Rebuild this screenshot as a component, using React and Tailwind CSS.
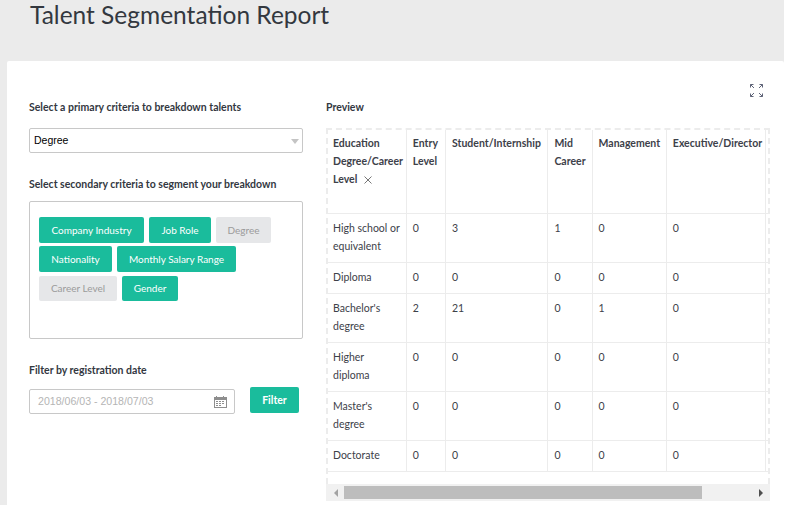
const font = "font-['Lato','Noto_Sans',sans-serif]";

const tags = [
  [
    { label: "Company Industry", w: "w-[105px]" },
    { label: "Job Role", w: "w-[62px]" },
    { label: "Degree", w: "w-[55px]", off: true },
  ],
  [
    { label: "Nationality", w: "w-[73px]" },
    { label: "Monthly Salary Range", w: "w-[119px]" },
  ],
  [
    { label: "Career Level", w: "w-[78px]", off: true, short: true },
    { label: "Gender", w: "w-[56px]", short: true },
  ],
];

const columns = [
  { title: "Entry Level", w: "w-[39px]" },
  { title: "Student/Internship", w: "w-[102px]" },
  { title: "Mid Career", w: "w-[44px]" },
  { title: "Management", w: "w-[74px]" },
  { title: "Executive/Director", w: "w-[99px]" },
];

const rows = [
  { name: "High school or equivalent", h: "h-[49px]", values: [0, 3, 1, 0, 0] },
  { name: "Diploma", h: "h-[31px]", values: [0, 0, 0, 0, 0] },
  { name: "Bachelor's degree", h: "h-[49px]", values: [2, 21, 0, 1, 0] },
  { name: "Higher diploma", h: "h-[49px]", values: [0, 0, 0, 0, 0] },
  { name: "Master's degree", h: "h-[49px]", values: [0, 0, 0, 0, 0] },
  { name: "Doctorate", h: "h-[31px]", values: [0, 0, 0, 0, 0] },
];

function Tag({ label, w, off, short }) {
  return (
    <span
      className={`flex items-center justify-center rounded-[2px] text-[10px] ${short ? "h-[25px]" : "h-[26px]"} ${w} ${
        off ? "bg-[#e6e7e9] text-[#9b9b9b]" : "bg-[#1abc9c] text-white"
      }`}
    >
      {label}
    </span>
  );
}

function ExpandIcon() {
  return (
    <svg width="13" height="13" viewBox="0 0 13 13" fill="none" stroke="#5f6478" strokeWidth="1">
      <path d="M.5 3.5v-3h3M.5.5l3.5 3.5M12.5 3.5v-3h-3M12.5.5L9 4M.5 9.5v3h3M.5 12.5L4 9M12.5 9.5v3h-3M12.5 12.5L9 9" />
    </svg>
  );
}

function CalendarIcon() {
  return (
    <svg width="13" height="12" viewBox="0 0 13 12" fill="#8e8e8e">
      <path d="M0 1h2V0h1v1h6V0h1v1h3v11H0zM1 4v7h11V4z" />
      <path d="M2 5h2v1H2zM5 5h2v1H5zM8 5h2v1H8zM2 7h2v1H2zM5 7h2v1H5zM8 7h2v1H8zM2 9h2v1H2zM5 9h2v1H5z" />
    </svg>
  );
}

function CloseIcon() {
  return (
    <svg className="ml-[7px] inline-block align-[-1px]" width="8" height="8" viewBox="0 0 8 8" fill="none" stroke="#666" strokeWidth="0.9">
      <path d="M.5.5l7 7M7.5.5l-7 7" />
    </svg>
  );
}

function PreviewTable() {
  return (
    <div className="h-[356px] w-[444px] overflow-hidden border-x-2 border-t-2 border-dashed border-[#ececec]">
      <table className="w-[500px] table-fixed border-collapse text-[10.5px] leading-[18px] text-[#3d4149]">
        <thead>
          <tr className="h-[83px] border-b border-[#ececec] align-top">
            <th className="w-[78px] border-r border-[#ececec] pl-[5px] pt-[4px] text-left font-bold">
              Education Degree/Career Level
              <CloseIcon />
            </th>
            {columns.map((col) => (
              <th key={col.title} className={`${col.w} border-r border-[#ececec] pl-[6px] pt-[4px] text-left font-bold`}>
                {col.title}
              </th>
            ))}
            <th className="w-[62px]" />
          </tr>
        </thead>
        <tbody>
          {rows.map((row) => (
            <tr key={row.name} className={`${row.h} border-b border-[#ececec] align-top`}>
              <td className="border-r border-[#ececec] pl-[5px] pr-[5px] pt-[5px]">{row.name}</td>
              {row.values.map((v, i) => (
                <td key={i} className="border-r border-[#ececec] pl-[6px] pt-[5px]">
                  {v}
                </td>
              ))}
              <td />
            </tr>
          ))}
        </tbody>
      </table>
    </div>
  );
}

export default function App() {
  return (
    <div className={`${font} h-[505px] w-[787px] overflow-hidden bg-white`}>
      <div className="h-full w-[784px] bg-[#ebebeb] pl-[7px]">
        <h1 className="h-[61px] pl-[23px] text-[24.5px] leading-[30px] text-[#33383f]">Talent Segmentation Report</h1>

        <div className="relative flex h-[444px] gap-[23px] rounded-t-[2px] bg-white pl-[22px] pt-[39px]">
          <div className="absolute right-[21px] top-[23px]">
            <ExpandIcon />
          </div>

          {/* Left column */}
          <div className="w-[274px]">
            <p className="text-[10.5px] font-bold leading-[14px] text-[#33383f]">Select a primary criteria to breakdown talents</p>
            <div className="relative mt-[14px] flex h-[25px] items-center rounded-[2px] border border-[#c8c8c8] pl-1 pt-[1px] font-['Liberation_Sans',sans-serif] text-[10.5px] text-black">
              Degree
              <span className="absolute right-[3px] top-[10px] h-0 w-0 border-x-[4px] border-t-[5px] border-x-transparent border-t-[#c4c4c4]" />
            </div>

            <p className="mt-[24px] text-[10.5px] font-bold leading-[14px] text-[#33383f]">Select secondary criteria to segment your breakdown</p>
            <div className="mt-[10px] flex h-[138px] flex-col gap-[3px] rounded-[2px] border border-[#c8c8c8] pl-[9px] pt-[15px]">
              {tags.map((row, i) => (
                <div key={i} className={`flex gap-[5px] ${i === 2 ? "mt-[1px]" : ""}`}>
                  {row.map((tag) => (
                    <Tag key={tag.label} {...tag} />
                  ))}
                </div>
              ))}
            </div>

            <p className="mt-[24px] text-[10.5px] font-bold leading-[14px] text-[#33383f]">Filter by registration date</p>
            <div className="mt-[10px] flex items-start">
              <div className="mt-[2px] flex h-[25px] w-[206px] items-center justify-between rounded-[2px] border border-[#c8c8c8] pl-2 pr-[7px] pt-[1px] font-['Liberation_Sans',sans-serif] text-[10.6px] text-[#b5b5b5]">
                2018/06/03 - 2018/07/03
                <CalendarIcon />
              </div>
              <button className="ml-[15px] h-[26px] w-[49px] rounded-[2px] bg-[#1abc9c] pt-[1px] text-[10.5px] font-bold text-white">Filter</button>
            </div>
          </div>

          {/* Preview */}
          <div className="w-[444px]">
            <p className="text-[10.5px] font-bold leading-[14px] text-[#33383f]">Preview</p>
            <div className="mt-[14px]">
              <PreviewTable />
              <div className="flex h-[17px] w-[444px] items-center bg-[#f1f1f1] px-[1px]">
                <span className="flex h-[13px] w-[17px] items-center justify-center">
                  <span className="h-0 w-0 border-y-[4px] border-r-[4px] border-y-transparent border-r-[#a3a3a3]" />
                </span>
                <span className="h-[13px] w-[358px] bg-[#bdbdbd]" />
                <span className="ml-auto flex h-[13px] w-[17px] items-center justify-center">
                  <span className="h-0 w-0 border-y-[4px] border-l-[4px] border-y-transparent border-l-[#505050]" />
                </span>
              </div>
            </div>
          </div>
        </div>
      </div>
    </div>
  );
}
